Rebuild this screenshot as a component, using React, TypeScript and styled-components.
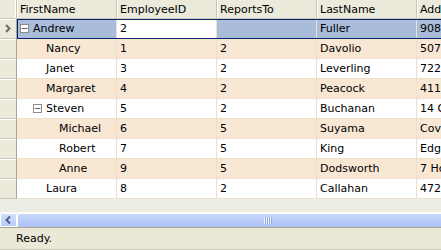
import styled, { createGlobalStyle } from "styled-components";

const GlobalStyle = createGlobalStyle`
  html, body {
    margin: 0;
    padding: 0;
    background: #ece9d8;
    overflow: hidden;
  }
  * {
    box-sizing: border-box;
  }
`;

type Employee = {
  first: string;
  id: number;
  reportsTo: string;
  last: string;
  address: string;
  level: number;
  parent?: boolean;
};

const employees: Employee[] = [
  { first: "Andrew", id: 2, reportsTo: "", last: "Fuller", address: "908 W. Capital Way", level: 0, parent: true },
  { first: "Nancy", id: 1, reportsTo: "2", last: "Davolio", address: "507 - 20th Ave. E.", level: 1 },
  { first: "Janet", id: 3, reportsTo: "2", last: "Leverling", address: "722 Moss Bay Blvd.", level: 1 },
  { first: "Margaret", id: 4, reportsTo: "2", last: "Peacock", address: "4110 Old Redmond Rd.", level: 1 },
  { first: "Steven", id: 5, reportsTo: "2", last: "Buchanan", address: "14 Garrett Hill", level: 1, parent: true },
  { first: "Michael", id: 6, reportsTo: "5", last: "Suyama", address: "Coventry House", level: 2 },
  { first: "Robert", id: 7, reportsTo: "5", last: "King", address: "Edgeham Hollow", level: 2 },
  { first: "Anne", id: 9, reportsTo: "5", last: "Dodsworth", address: "7 Houndstooth Rd.", level: 2 },
  { first: "Laura", id: 8, reportsTo: "2", last: "Callahan", address: "4726 - 11th Ave. N.E.", level: 1 },
];

const columns = ["FirstName", "EmployeeID", "ReportsTo", "LastName", "Address"];

export default function App() {
  return (
    <>
      <GlobalStyle />
      <S.Window>
        <S.GridArea>
          <S.HeaderRow>
            <S.Corner />
            {columns.map((c) => (
              <S.HeaderCell key={c}>{c}</S.HeaderCell>
            ))}
          </S.HeaderRow>
          {employees.map((e, i) => {
            const selected = i === 0;
            return (
              <S.Row key={e.id} $alt={i % 2 === 1} $selected={selected}>
                <S.RowHeader>
                  {selected ? (
                    <svg width="6" height="9" viewBox="0 0 6 9">
                      <path d="M1 1 L4.5 4.5 L1 8" fill="none" stroke="#6b6b6b" strokeWidth="2" />
                    </svg>
                  ) : null}
                </S.RowHeader>
                <S.TreeCell $indent={3 + 13 * e.level}>
                  {e.parent ? <S.Toggle>−</S.Toggle> : <S.Spacer />}
                  <span>{e.first}</span>
                </S.TreeCell>
                <S.Cell $edit={selected}>{e.id}</S.Cell>
                <S.Cell>{e.reportsTo}</S.Cell>
                <S.Cell>{e.last}</S.Cell>
                <S.Cell>{e.address}</S.Cell>
              </S.Row>
            );
          })}
        </S.GridArea>
        <S.ScrollBar>
          <S.ArrowButton>
            <svg width="7" height="8" viewBox="0 0 7 8">
              <path d="M5 0.5 L1.5 4 L5 7.5" fill="none" stroke="#4d6185" strokeWidth="2" />
            </svg>
          </S.ArrowButton>
          <S.Thumb>
            <S.Grip />
          </S.Thumb>
        </S.ScrollBar>
        <S.StatusBar>Ready.</S.StatusBar>
      </S.Window>
    </>
  );
}

const S = {
  Window: styled.div`
    width: 441px;
    height: 250px;
    display: flex;
    flex-direction: column;
    overflow: hidden;
    font-family: "DejaVu Sans", "Liberation Sans", sans-serif;
    font-size: 11px;
    color: #000;
  `,

  GridArea: styled.div`
    flex: 1;
    background: #eeede5;
    overflow: hidden;
  `,

  HeaderRow: styled.div`
    display: grid;
    grid-template-columns: 17px repeat(5, 100px);
    height: 19px;
    background: #ebeadb;
    border-bottom: 1px solid #cbc7b8;
  `,

  Corner: styled.div`
    border-right: 1px solid #c7c5b2;
    box-shadow: inset -1px 0 0 #fff;
  `,

  HeaderCell: styled.div`
    display: flex;
    align-items: center;
    padding-left: 3px;
    border-right: 1px solid #c7c5b2;
    box-shadow: inset 1px 0 0 #fff;
    white-space: nowrap;
    overflow: hidden;
  `,

  Row: styled.div<{ $alt: boolean; $selected: boolean }>`
    display: grid;
    grid-template-columns: 17px repeat(5, 100px);
    height: 20px;
    position: relative;
    background: ${(p) => (p.$selected ? "#a9bcda" : p.$alt ? "#f8e7d3" : "#ffffff")};

    ${(p) =>
      p.$selected &&
      `
      &::after {
        content: "";
        position: absolute;
        left: 17px;
        top: 0;
        right: 0;
        bottom: 0;
        border: 1px solid #0a246a;
        border-right: none;
        pointer-events: none;
      }
    `}
  `,

  RowHeader: styled.div`
    background: #ebeadb;
    border-right: 1px solid #a7a594;
    border-bottom: 1px solid #c9c6b6;
    box-shadow: inset 0 1px 0 #fff;
    display: flex;
    align-items: center;
    justify-content: center;
  `,

  Cell: styled.div<{ $edit?: boolean }>`
    display: flex;
    align-items: center;
    padding-left: 3px;
    border-right: 1px solid #ece1cf;
    border-bottom: 1px solid #ece1cf;
    white-space: nowrap;
    overflow: hidden;
    background: ${(p) => (p.$edit ? "#ffffff" : "transparent")};
  `,

  TreeCell: styled.div<{ $indent: number }>`
    display: flex;
    align-items: center;
    gap: 4px;
    padding-left: ${(p) => p.$indent}px;
    border-right: 1px solid #ece1cf;
    border-bottom: 1px solid #ece1cf;
    white-space: nowrap;
    overflow: hidden;
  `,

  Toggle: styled.span`
    width: 9px;
    height: 9px;
    border: 1px solid #8c8c8c;
    background: #fff;
    display: flex;
    align-items: center;
    justify-content: center;
    font-size: 9px;
    line-height: 1;
    color: #333;
    flex-shrink: 0;
  `,

  Spacer: styled.span`
    width: 9px;
    flex-shrink: 0;
  `,

  ScrollBar: styled.div`
    height: 15px;
    display: flex;
    background: #f3f1ec;
    border-top: 1px solid #f8f8f4;
    overflow: hidden;
  `,

  ArrowButton: styled.div`
    width: 17px;
    flex-shrink: 0;
    display: flex;
    align-items: center;
    justify-content: center;
    background: linear-gradient(#d3e0fd, #b8cbf8);
    border: 1px solid #fff;
    border-radius: 2px;
  `,

  Thumb: styled.div`
    width: 498px;
    flex-shrink: 0;
    position: relative;
    background: linear-gradient(#c9d8fc, #b6c9f7 60%, #aec3f5);
    border-top: 1px solid #fff;
    border-left: 1px solid #fff;
    border-radius: 2px;
  `,

  Grip: styled.div`
    position: absolute;
    left: 246px;
    top: 3px;
    width: 8px;
    height: 7px;
    background: repeating-linear-gradient(90deg, #eef3ff 0 1px, #8da9e6 1px 2px);
  `,

  StatusBar: styled.div`
    height: 23px;
    flex-shrink: 0;
    display: flex;
    align-items: center;
    padding-left: 16px;
    background: #ebe8d7;
    border-top: 1px solid #a9a797;
    border-bottom: 1px solid #cfcdbd;
  `,
};
